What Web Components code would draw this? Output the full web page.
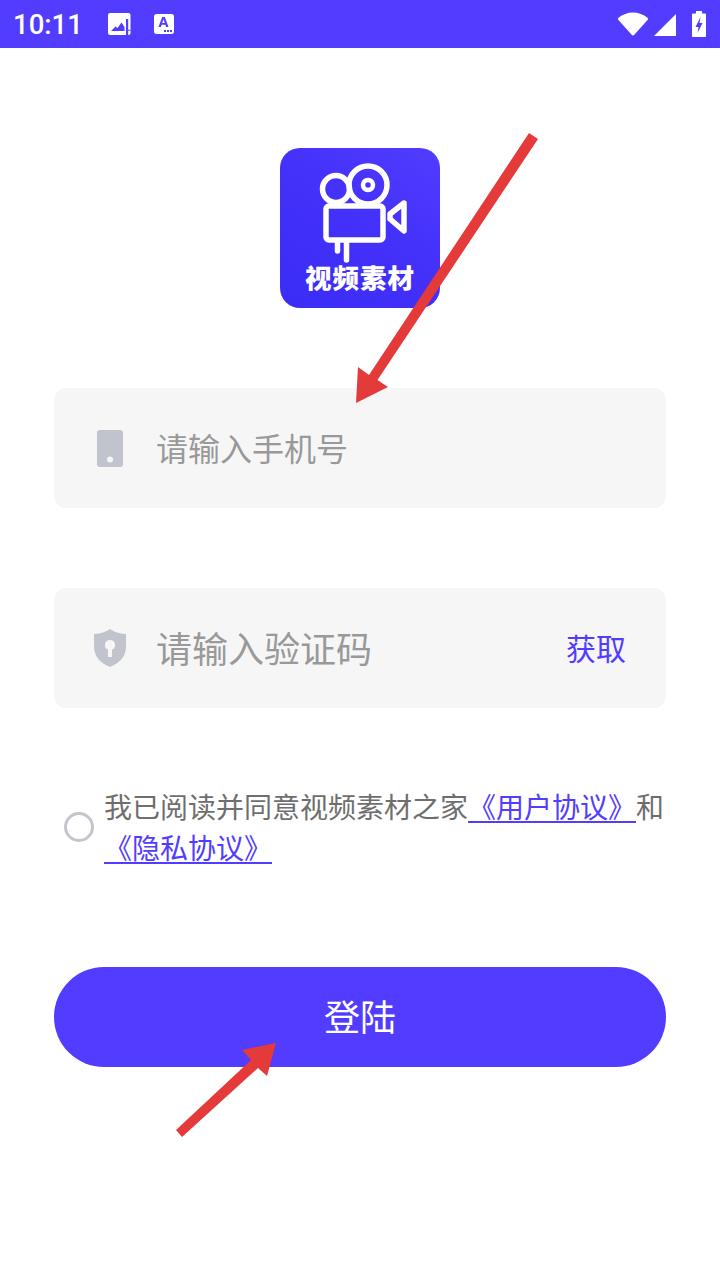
<!DOCTYPE html>
<html lang="zh">
  <head>
    <meta charset="UTF-8">
    <title>登陆</title>
    <style>
      html, body { margin: 0; padding: 0; background: #fff; }
      body { width: 720px; height: 1280px; overflow: hidden; position: relative;
        font-family: "Noto Sans CJK SC", "Noto Sans", sans-serif; }
    </style>
  </head>
  <body>
    <script>
      const SANS = `"Noto Sans CJK SC", "Noto Sans", sans-serif`;
      const BRAND = '#513cff';

      class StatusBar extends HTMLElement {
        constructor() {
          super();
          this.attachShadow({ mode: 'open' });
          this.shadowRoot.innerHTML = `
            <style>
              :host { display: flex; align-items: center; height: 48px; background: ${BRAND}; color: #fff; }
              .time { font: 500 27.500px/34px Roboto, sans-serif; margin-left: 13px; width: 94px; padding-top: 2px; }
              svg { display: block; fill: #fff; }
              .left { display: flex; gap: 23px; align-items: center; }
              .right { margin-left: auto; margin-right: 14px; display: flex; align-items: center; }
            </style>
            <span class="time">10:11</span>
            <div class="left">
              <svg width="24" height="24" viewBox="0 0 24 24">
                <rect x="1" y="1" width="22.500" height="22" rx="2"/>
                <path fill="${BRAND}" d="M4 19l4.500-4.500 2 1.500 4-5.500 3 4.500V19z"/>
                <path fill="${BRAND}" d="M19 7h2.200v16H19zM21 17.700h2.500v1H21z"/>
              </svg>
              <svg width="20" height="24" viewBox="0 0 20 24">
                <rect x="0" y="2" width="20" height="20" rx="2.500"/>
                <path fill="${BRAND}" d="M8.200 5h2.600l3.700 10h-2.400l-.7-2.200H7.600L6.900 15H4.500zM8.200 11h2.600L9.500 7.300z" fill-rule="evenodd"/>
                <path fill="${BRAND}" d="M10 18h2v2h-2zM13 18h2v2h-2zM16 18h2v2h-2z"/>
              </svg>
            </div>
            <div class="right">
              <svg width="32" height="24" viewBox="0 0 32 24" style="margin-right:5px"><path d="M16 23.500c-.6 0-1-.3-1.300-.7L1 7.500Q.5 6.500 1.500 5.800C5.500 2.500 10.500.5 16 .5s10.500 2 14.500 5.300Q31.500 6.500 31 7.500L17.300 22.800c-.3.400-.7.700-1.300.7z"/></svg>
              <svg width="22" height="24" viewBox="0 0 22 24" style="margin-right:16px"><path d="M22 2v22H0z"/></svg>
              <svg width="14" height="26" viewBox="0 0 14 26">
                <path d="M4 0h6v2.500h3a1 1 0 0 1 1 1V25a1 1 0 0 1-1 1H1a1 1 0 0 1-1-1V3.500a1 1 0 0 1 1-1h3z"/>
                <path fill="${BRAND}" d="M8.500 6L3.500 16h3l-1 6L10.500 12H7.500z"/>
              </svg>
            </div>
          `;
        }
      }
      customElements.define('status-bar', StatusBar);

      class AppLogo extends HTMLElement {
        constructor() {
          super();
          this.attachShadow({ mode: 'open' });
          this.shadowRoot.innerHTML = `
            <style>
              :host { display: block; width: 160px; height: 160px; border-radius: 20px; overflow: hidden;
                position: relative; background: linear-gradient(35deg, #3a2cf6 0%, #4431fa 55%, ${BRAND} 100%); }
              svg { display: block; }
              .name { position: absolute; left: 0; right: 0; top: 112px; height: 34px;
                text-align: center; color: #fff; font: 900 26.500px/34px ${SANS}; letter-spacing: 1px; white-space: nowrap; }
            </style>
            <svg width="160" height="160" viewBox="0 0 160 160" fill="none" stroke="#fff" stroke-width="5.500" stroke-linecap="round" stroke-linejoin="round">
              <circle cx="56" cy="41" r="13.500"/>
              <circle cx="88" cy="37" r="19"/>
              <circle cx="88" cy="37" r="5" stroke-width="4.500"/>
              <rect x="46" y="58" width="57" height="34" rx="3"/>
              <path d="M124 55L110 66v5l14 12z"/>
              <path d="M57.500 95v8M66.500 95v17"/>
            </svg>
            <div class="name">视频素材</div>
          `;
        }
      }
      customElements.define('app-logo', AppLogo);

      class FormField extends HTMLElement {
        constructor() {
          super();
          this.attachShadow({ mode: 'open' });
          this.shadowRoot.innerHTML = `
            <style>
              :host { display: flex; align-items: center; box-sizing: border-box; height: 120px; width: 612px;
                background: #f6f6f7; border-radius: 12px; padding: 0 40px 0 38px; }
              .icon { width: 36px; display: flex; justify-content: center; margin-right: 28px; }
              .text { font: 400 32px/44px ${SANS}; color: #999; flex: 1; margin-bottom: 2px; }
              :host([large]) .text { font-size: 36px; }
              ::slotted([slot="action"]) { font: 400 30px/44px ${SANS}; color: ${BRAND}; margin-bottom: 2px; }
            </style>
            <div class="icon"><slot name="icon"></slot></div>
            <div class="text"><slot></slot></div>
            <slot name="action"></slot>
          `;
        }
      }
      customElements.define('form-field', FormField);

      class AgreeRow extends HTMLElement {
        constructor() {
          super();
          this.attachShadow({ mode: 'open' });
          this.shadowRoot.innerHTML = `
            <style>
              :host { display: flex; align-items: center; width: 612px; padding-left: 10px; box-sizing: border-box; }
              .radio { flex: none; width: 30px; height: 30px; box-sizing: border-box; border: 3.500px solid #c4c6cb; border-radius: 50%; margin-right: 10px; }
              .text { font: 400 28px/41px ${SANS}; color: #6e6e6e; width: 562px; }
            </style>
            <div class="radio"></div>
            <div class="text"><slot></slot></div>
          `;
        }
      }
      customElements.define('agree-row', AgreeRow);

      class AgreeLink extends HTMLElement {
        constructor() {
          super();
          this.attachShadow({ mode: 'open' });
          // no whitespace round the slot, it would show up as a space
          this.shadowRoot.innerHTML = `<style>:host { color: ${BRAND}; text-decoration: underline; text-underline-offset: 3px; text-decoration-thickness: 1.5px; }</style><slot></slot>`;
        }
      }
      customElements.define('agree-link', AgreeLink);

      class LoginButton extends HTMLElement {
        constructor() {
          super();
          this.attachShadow({ mode: 'open' });
          this.shadowRoot.innerHTML = `
            <style>
              :host { display: flex; align-items: center; justify-content: center; width: 612px; height: 100px; box-sizing: border-box;
                padding-bottom: 4px; border-radius: 50px; background: ${BRAND}; color: #fff; font: 400 36px/50px ${SANS}; }
            </style>
            <slot></slot>
          `;
        }
      }
      customElements.define('login-button', LoginButton);

      // the red annotation arrows lie over the form
      class MarkArrows extends HTMLElement {
        constructor() {
          super();
          this.attachShadow({ mode: 'open' });
          this.shadowRoot.innerHTML = `
            <style>
              :host { position: absolute; left: 0; top: 0; width: 720px; height: 1280px; pointer-events: none; }
            </style>
            <svg width="720" height="1280" viewBox="0 0 720 1280" fill="#e53a3a">
              <path d="M529 133L538 139L377.500 380L388 387L356 403L358 367L369 375z"/>
              <path d="M176 1130L251 1060L242 1050L276 1043L267 1076L258 1068L182 1137z"/>
            </svg>
          `;
        }
      }
      customElements.define('mark-arrows', MarkArrows);

      class LoginPage extends HTMLElement {
        constructor() {
          super();
          this.attachShadow({ mode: 'open' });
          this.shadowRoot.innerHTML = `
            <style>
              :host { display: block; width: 720px; height: 1280px; background: #fff; }
              main { display: flex; flex-direction: column; align-items: center; padding-top: 100px; }
              .fields { display: flex; flex-direction: column; gap: 80px; margin-top: 80px; }
              .agree { margin-top: 78px; }
              .submit { margin-top: 99px; }
            </style>
            <status-bar></status-bar>
            <main>
              <app-logo></app-logo>
              <div class="fields"><slot name="fields"></slot></div>
              <div class="agree"><slot name="agree"></slot></div>
              <div class="submit"><slot name="submit"></slot></div>
            </main>
            <mark-arrows></mark-arrows>
          `;
        }
      }
      customElements.define('login-page', LoginPage);
    </script>

    <login-page>
      <div slot="fields" style="display:flex;flex-direction:column;gap:80px">
        <form-field>
          <svg slot="icon" width="26" height="37" viewBox="0 0 26 37" style="display:block">
            <rect width="26" height="37" rx="3" fill="#c1c4cc"/>
            <circle cx="13" cy="29.500" r="3" fill="#f6f6f7"/>
          </svg>
          请输入手机号
        </form-field>
        <form-field large>
          <svg slot="icon" width="32" height="38" viewBox="0 0 32 38" style="display:block">
            <path fill="#c1c4cc" d="M16 0c4 3 9 4.500 16 5v13c0 9-6 16-16 20C6 34 0 27 0 18V5c7-.5 12-2 16-5z"/>
            <path fill="#f6f6f7" d="M16 11a5 5 0 0 1 2 9.600V28h-4v-7.400A5 5 0 0 1 16 11z"/>
          </svg>
          请输入验证码
          <span slot="action">获取</span>
        </form-field>
      </div>
      <agree-row slot="agree">我已阅读并同意视频素材之家<agree-link>《用户协议》</agree-link>和<agree-link>《隐私协议》</agree-link></agree-row>
      <login-button slot="submit">登陆</login-button>
    </login-page>
  </body>
</html>
